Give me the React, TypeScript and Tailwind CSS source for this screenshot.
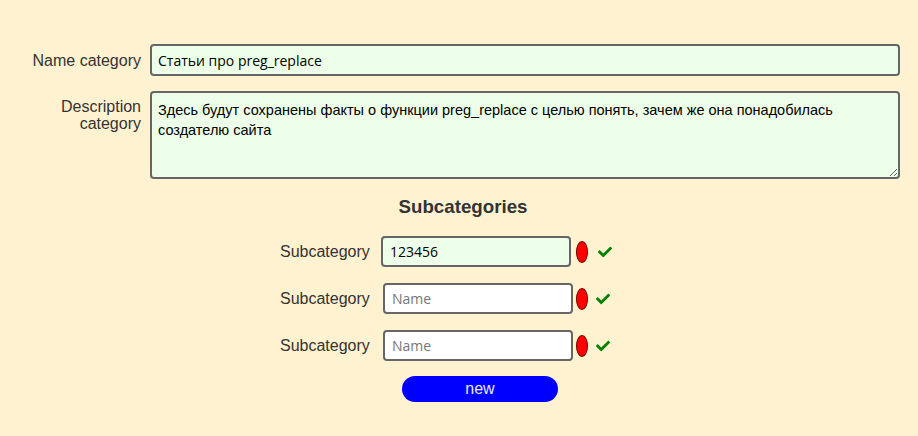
import React from "react";
import { FaCheck } from "react-icons/fa";

const labelFont = { fontFamily: '"Liberation Sans", Arial, sans-serif' };

function SubRow({ value, focused }: { value?: string; focused?: boolean }) {
  return (
    <div className="flex items-center h-[47px]">
      <div className="w-[89px] text-[16px] text-[#333] text-right" style={labelFont}>
        Subcategory
      </div>
      <input
        defaultValue={value}
        placeholder="Name"
        className={`${focused ? "ml-[12px] bg-[#edffe9]" : "ml-[14px] bg-white"} w-[190px] h-[31px] border-2 border-[#666] rounded-[4px] px-[7px] text-[14px] text-black placeholder:text-[#777] outline-none`}
        style={{ fontFamily: '"Open Sans", sans-serif' }}
      />
      <div className={`${focused ? "ml-[5px]" : "ml-[3px]"} w-[12px] h-[22px] rounded-[50%] bg-[#f00] border border-[#7a0000]`} />
      <FaCheck className={`${focused ? "ml-[10px]" : "ml-[8px]"} text-[#008000] w-[14px] h-[14px]`} />
    </div>
  );
}

export default function App() {
  return (
    <div className="min-h-[436px] w-full bg-[#fff2d0] pt-[44px]" style={labelFont}>
      <div className="flex items-center">
        <div className="w-[150px] pr-[9px] pt-[2px] text-right text-[16px] text-[#333]">Name category</div>
        <input
          defaultValue="Статьи про preg_replace"
          className="w-[750px] h-[32px] border-2 border-[#666] rounded-[4px] bg-[#edffe9] px-[6px] text-[14px] text-black outline-none"
          style={{ fontFamily: '"Open Sans", sans-serif' }}
        />
      </div>
      <div className="flex items-start mt-[15px]">
        <div className="w-[150px] pr-[9px] pt-[7px] text-right text-[16px] leading-[17px] text-[#333]">
          Description
          <br />
          category
        </div>
        <textarea
          defaultValue="Здесь будут сохранены факты о функции preg_replace с целью понять, зачем же она понадобилась создателю сайта"
          className="w-[750px] h-[88px] border-2 border-[#666] rounded-[4px] bg-[#edffe9] px-[6px] py-[7px] text-[14.5px] leading-[20px] text-black outline-none resize-y"
          style={labelFont}
        />
      </div>
      <div className="flex justify-center pl-[8px] mt-[16px]">
        <div className="text-[18.72px] font-bold text-[#333] leading-[23px]">Subcategories</div>
      </div>
      <div className="ml-[280px] mt-[10px] flex flex-col">
        <SubRow value="123456" focused />
        <SubRow />
        <SubRow />
      </div>
      <div className="flex justify-center pl-[42px] mt-[7px]">
        <button className="w-[156px] h-[26px] rounded-full bg-[#0000ff] text-[#e8e8ff] text-[16px] leading-[26px]">
          new
        </button>
      </div>
    </div>
  );
}
